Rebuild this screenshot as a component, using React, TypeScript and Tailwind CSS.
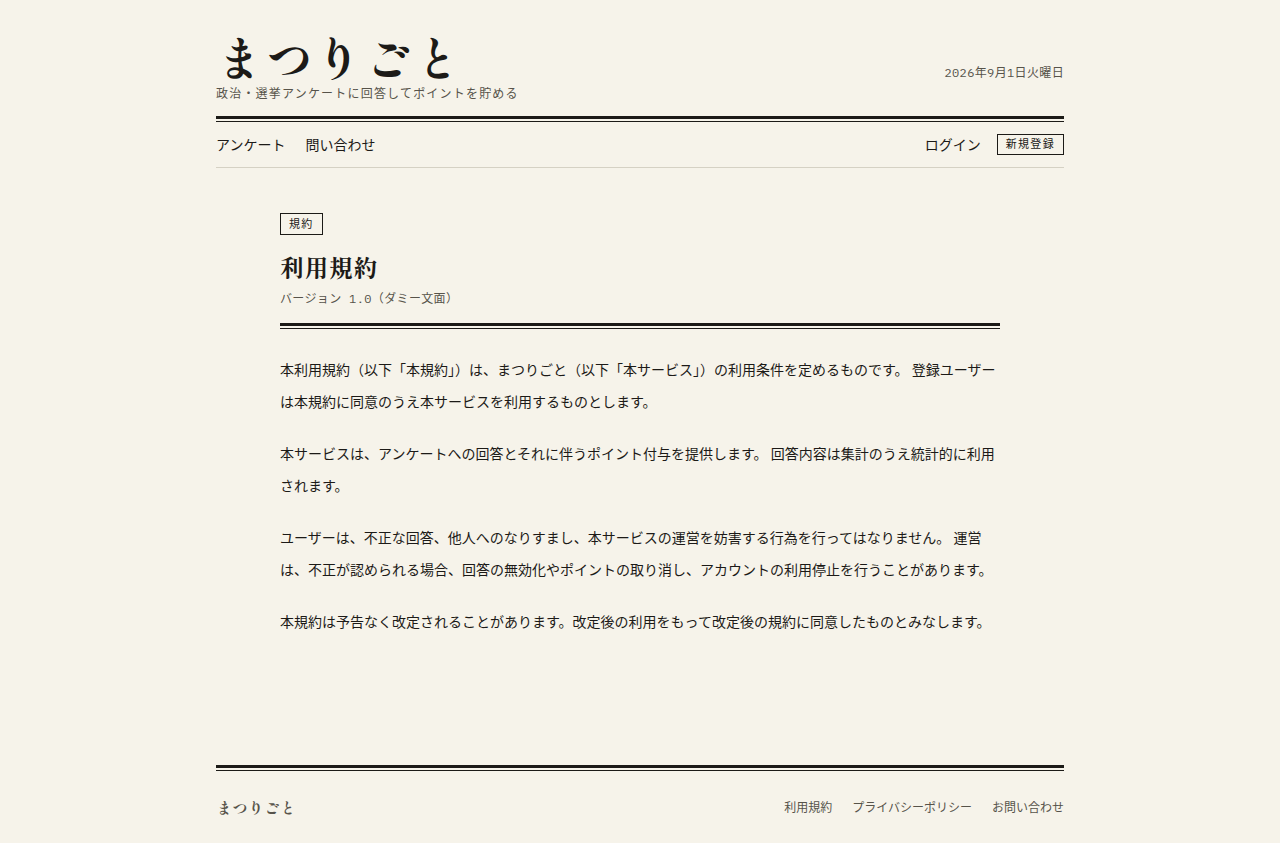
import type { ReactNode } from "react";

const NAV_LINKS = [
  { label: "アンケート", href: "/surveys" },
  { label: "問い合わせ", href: "/contact" },
];

const FOOTER_LINKS = [
  { label: "利用規約", href: "/terms" },
  { label: "プライバシーポリシー", href: "/privacy" },
  { label: "お問い合わせ", href: "/contact" },
];

const PARAGRAPHS = [
  "本利用規約（以下「本規約」）は、まつりごと（以下「本サービス」）の利用条件を定めるものです。 登録ユーザーは本規約に同意のうえ本サービスを利用するものとします。",
  "本サービスは、アンケートへの回答とそれに伴うポイント付与を提供します。 回答内容は集計のうえ統計的に利用されます。",
  "ユーザーは、不正な回答、他人へのなりすまし、本サービスの運営を妨害する行為を行ってはなりません。 運営は、不正が認められる場合、回答の無効化やポイントの取り消し、アカウントの利用停止を行うことがあります。",
  "本規約は予告なく改定されることがあります。改定後の利用をもって改定後の規約に同意したものとみなします。",
];

function DoubleRule() {
  return <div className="h-[6px] border-t-[3px] border-b border-[#1c1a17]" />;
}

function Mono({ children }: { children: ReactNode }) {
  return (
    <p className="font-['IBM_Plex_Mono','Liberation_Mono','Noto_Sans_CJK_JP',monospace] text-xs tracking-[0.03em] text-[#57534a]">
      {children}
    </p>
  );
}

function Header() {
  return (
    <header>
      <div className="flex items-baseline justify-between gap-4 pt-8 pb-3.5">
        <div>
          <a
            href="/"
            className="block font-['Shippori_Mincho','Noto_Serif_JP','Noto_Serif_CJK_JP','Noto_Sans_CJK_JP',serif] text-5xl leading-[48px] font-bold tracking-[0.03em]"
          >
            まつりごと
          </a>
          <p className="mt-1 text-xs leading-[18px] tracking-[0.1em] text-[#57534a]">
            政治・選挙アンケートに回答してポイントを貯める
          </p>
        </div>
        <Mono>2026年9月1日火曜日</Mono>
      </div>
      <DoubleRule />
      <nav className="flex items-center justify-between border-b border-[#d5d1c4] py-3 text-sm leading-[21px]">
        <div className="flex gap-5">
          {NAV_LINKS.map((link) => (
            <a key={link.label} href={link.href}>
              {link.label}
            </a>
          ))}
        </div>
        <div className="flex items-center gap-4">
          <a href="/login">ログイン</a>
          <a
            href="/register"
            className="border border-[#1c1a17] px-2 font-['IBM_Plex_Mono','Liberation_Mono','Noto_Sans_CJK_JP',monospace] text-[11px] leading-[19px] tracking-[0.12em]"
          >
            新規登録
          </a>
        </div>
      </nav>
    </header>
  );
}

function Footer() {
  return (
    <footer>
      <DoubleRule />
      <div className="flex items-center justify-between py-6 text-xs leading-6 text-[#57534a]">
        <p className="font-['Shippori_Mincho','Noto_Serif_JP','Noto_Serif_CJK_JP','Noto_Sans_CJK_JP',serif] text-base leading-6 font-bold">
          まつりごと
        </p>
        <div className="flex gap-5">
          {FOOTER_LINKS.map((link) => (
            <a key={link.label} href={link.href}>
              {link.label}
            </a>
          ))}
        </div>
      </div>
    </footer>
  );
}

export default function App() {
  return (
    <div
      lang="ja"
      className="min-h-screen bg-[#f6f3ea] font-['Noto_Sans_CJK_JP',sans-serif] text-[#1c1a17]"
    >
      <div className="mx-auto flex min-h-screen max-w-4xl flex-col px-6">
        <Header />
        <main className="mx-auto w-full max-w-[720px] grow pt-[45px] pb-12">
          <div className="w-fit border border-[#1c1a17] px-2 font-['IBM_Plex_Mono','Liberation_Mono','Noto_Sans_CJK_JP',monospace] text-[11px] leading-5 tracking-[0.12em]">
            規約
          </div>
          <h1 className="mt-3.5 font-['Shippori_Mincho','Noto_Serif_JP','Noto_Serif_CJK_JP','Noto_Sans_CJK_JP',serif] text-2xl leading-9 font-bold tracking-[0.02em]">
            利用規約
          </h1>
          <div className="mt-1.5 mb-4">
            <Mono>バージョン 1.0（ダミー文面）</Mono>
          </div>
          <DoubleRule />
          <div className="mt-6 space-y-5 text-sm leading-8">
            {PARAGRAPHS.map((text) => (
              <p key={text}>{text}</p>
            ))}
          </div>
        </main>
        <Footer />
      </div>
    </div>
  );
}
